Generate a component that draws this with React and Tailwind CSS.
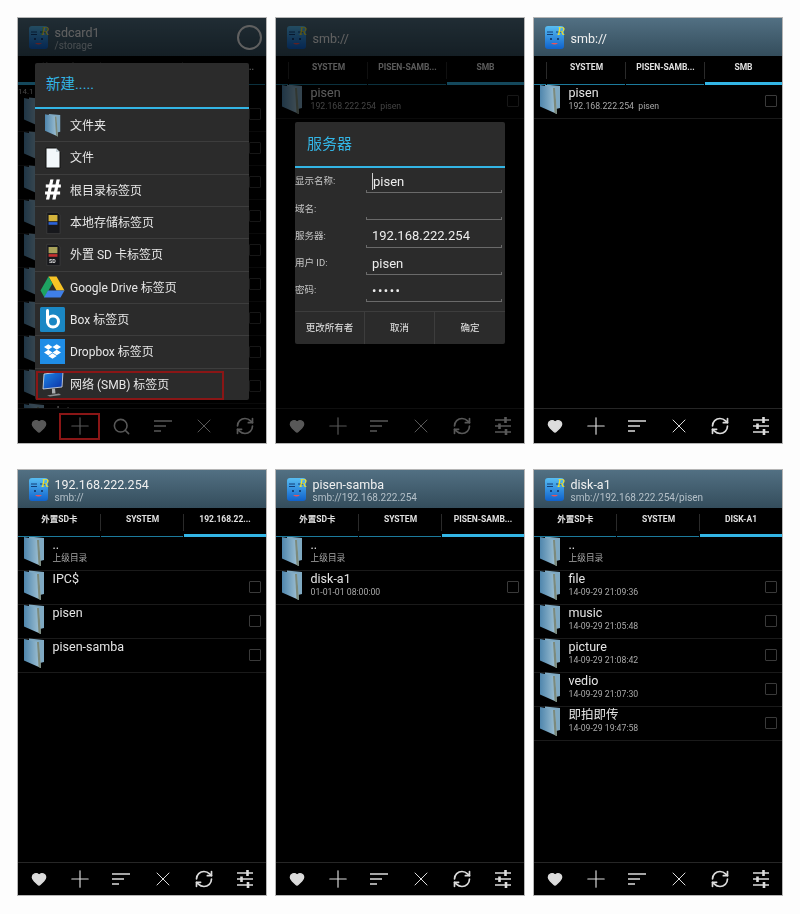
import React from 'react';
import { Heart, Plus, X, RefreshCw, Search } from 'lucide-react';
import { FaDropbox } from 'react-icons/fa';

const cjk = "font-['Roboto','Noto_Sans_CJK_SC',sans-serif]";

const AppLogo = () => (
    <svg width="24" height="26" viewBox="0 0 24 26" className="shrink-0">
        <defs>
            <linearGradient id="logoBlue" x1="0" y1="0" x2="0" y2="1">
                <stop offset="0" stopColor="#58bdf2" />
                <stop offset="1" stopColor="#0f62cc" />
            </linearGradient>
        </defs>
        <rect x="1" y="2" width="19" height="23" rx="3" fill="url(#logoBlue)" />
        <path d="M3 8h6M3 10.5h6M12 8h6" stroke="#123f78" strokeWidth="1" />
        <circle cx="7" cy="15" r="1" fill="#0c2c5c" />
        <circle cx="14" cy="15" r="1" fill="#0c2c5c" />
        <path d="M7 19q3.500 3 7 0z" fill="#e9535b" />
        <text x="13" y="11" fontSize="13" fontStyle="italic" fontFamily="Liberation Serif, serif" fill="#f2e12c">R</text>
    </svg>
);

const Folder = ({ className = '' }) => (
    <svg width="21" height="30" viewBox="0 0 21 30" className={`shrink-0 ${className}`}>
        <defs>
            <linearGradient id="folderFace" x1="0" y1="0" x2="1" y2="0">
                <stop offset="0" stopColor="#4f86ad" />
                <stop offset="1" stopColor="#a5c5d6" />
            </linearGradient>
        </defs>
        <path d="M5 0.500 20 2 20 24 16 25 5 22z" fill="#7fa9c2" />
        <path d="M0 1 15 4 17 30 0 22.500z" fill="url(#folderFace)" />
        <path d="M13 4 15 4 17 30 14.500 29z" fill="#7c8a7c" />
    </svg>
);

const SdIcon = ({ local }) => (
    <svg width="16" height="24" viewBox="0 0 18 26">
        <path d="M2 1h12l3 3v21H2z" fill="#17181c" stroke="#3d3d3d" />
        <rect x="4" y="4" width="10" height="7" fill={local ? '#d3b33c' : '#a8a25a'} />
        <rect x="4" y="12" width="10" height="3" fill={local ? '#2b62d8' : '#c23030'} />
        {!local && <text x="4.500" y="22" fontSize="6" fontWeight="700" fill="#ddd" fontFamily="Roboto, sans-serif">SD</text>}
    </svg>
);

const FileIcon = () => (
    <svg width="16" height="22" viewBox="0 0 16 22">
        <path d="M1 1h10l4 4v16H1z" fill="#f3f8fb" stroke="#111" />
        <path d="M11 1v4h4" fill="#c9d4da" />
    </svg>
);

const DriveIcon = () => (
    <svg width="25" height="22" viewBox="0 0 25 22">
        <path d="M8.500 0.500h8l8 14h-8z" fill="#f7c325" />
        <path d="M8.500 0.500l4 7-8 14-4-7z" fill="#1ea362" />
        <path d="M8 14.500h16.500l-4 7H4z" fill="#3f7fe8" />
    </svg>
);

const BoxIcon = () => (
    <svg width="25" height="25" viewBox="0 0 25 25">
        <rect width="25" height="25" rx="1.500" fill="#1a87c4" />
        <path d="M7.500 3.500v11" stroke="#fff" strokeWidth="3" strokeLinecap="round" />
        <circle cx="13" cy="14.500" r="5.500" fill="none" stroke="#fff" strokeWidth="3" />
    </svg>
);

const DropboxIcon = () => (
    <div className="w-[25px] h-[25px] bg-[#1f8de6] flex items-center justify-center">
        <FaDropbox className="w-[17px] h-[17px] text-white" />
    </div>
);

const MonitorIcon = () => (
    <svg width="22" height="26" viewBox="0 0 22 26">
        <defs>
            <linearGradient id="screenBlue" x1="0" y1="0" x2="1" y2="1">
                <stop offset="0" stopColor="#1f8ae6" />
                <stop offset="1" stopColor="#0a2fa6" />
            </linearGradient>
        </defs>
        <path d="M2 3 21 0.500 20 16 1 18z" fill="url(#screenBlue)" stroke="#dfe5ea" strokeWidth="0.800" />
        <path d="M10 17.500h3l0.500 5h-3.500z" fill="#a9adb0" />
        <path d="M5 24.500 17 22.500 19 24 8 25.500z" fill="#8b8f92" />
    </svg>
);

const SortIcon = () => (
    <svg width="20" height="14" viewBox="0 0 20 14" fill="none" stroke="currentColor" strokeWidth="1.600">
        <path d="M1 2h18M1 7h12M1 12h7" />
    </svg>
);

const SlidersIcon = () => (
    <svg width="20" height="20" viewBox="0 0 20 20" fill="none" stroke="currentColor">
        <path d="M2 4h16M2 10h16M2 16h16" strokeWidth="1.300" />
        <path d="M12.500 1v6M6.500 7.500v5.500M13 13v6" strokeWidth="2.600" />
    </svg>
);

const iconSets = {
    search: [
        <Heart key="h" size={16} fill="currentColor" />,
        <Plus key="p" size={28} strokeWidth={1} />,
        <Search key="s" size={19} strokeWidth={2} />,
        <SortIcon key="o" />,
        <X key="x" size={24} strokeWidth={1} />,
        <RefreshCw key="r" size={20} strokeWidth={2} />,
    ],
    normal: [
        <Heart key="h" size={16} fill="currentColor" />,
        <Plus key="p" size={28} strokeWidth={1} />,
        <SortIcon key="o" />,
        <X key="x" size={24} strokeWidth={1} />,
        <RefreshCw key="r" size={20} strokeWidth={2} />,
        <SlidersIcon key="l" />,
    ],
};

const FileRow = ({ title, sub, check = true }) => (
    <div className="h-[34px] shrink-0 flex items-start pl-[6px] pr-[5px] border-b border-[#1a1a1a]">
        <Folder className="-mt-px" />
        <div className="flex-1 min-w-0 pl-[7.500px]">
            <p className="text-[12.500px] leading-[15px] text-[#e4e4e4] whitespace-nowrap">{title}</p>
            {sub && <p className="text-[8.700px] leading-[12px] text-[#a8a8a8] whitespace-nowrap">{sub}</p>}
        </div>
        {check && <div className="w-[12px] h-[12px] mt-[10px] border border-[#3a3a3a] rounded-[1px]" />}
    </div>
);

const Phone = ({ title, path, tabs, active, cols, rows, icons = 'normal', spinner, children, preRow, barHeight = 'h-[35px]' }) => (
    <div className={`relative w-[248px] h-[425px] bg-black overflow-hidden flex flex-col ring-1 ring-[#b5b5b5] ${cjk}`}>
        <header className="h-[38px] shrink-0 flex items-center pl-[10px] pr-[4px] gap-[2.500px] bg-linear-to-b from-[#527083] to-[#344d5c]">
            <AppLogo />
            <div className="flex-1 min-w-0 pt-[3px]">
                <p className="text-[12.500px] leading-[15px] text-[#f0f0f0]">{title}</p>
                {path && <p className="text-[10px] leading-[12px] text-[#b4c0c8]">{path}</p>}
            </div>
            {spinner && <div className="w-[25px] h-[25px] rounded-full border-2 border-[#f0f0f0]" />}
        </header>
        <nav className={`h-[29px] shrink-0 grid ${cols}`}>
            {tabs.map((tab, i) => (
                <div key={i} className="relative flex flex-col justify-between">
                    <div className="h-[22px] flex items-center justify-center text-[8.500px] font-bold text-[#e0e0e0] whitespace-nowrap overflow-hidden">
                        {tab}
                    </div>
                    {i < tabs.length - 1 && <div className="absolute right-0 top-[6px] h-[17px] w-px bg-[#2a2a2a]" />}
                    {i === active
                        ? <div className="h-[3px] bg-[#33b5e5]" />
                        : <div className="h-[3px] flex items-end"><div className="h-[1.500px] w-full bg-[#1c7a9c] mr-px" /></div>}
                </div>
            ))}
        </nav>
        <div className="flex-1 min-h-0 overflow-hidden">
            {preRow}
            {rows.map((row, i) => <FileRow key={i} {...row} />)}
        </div>
        <footer className={`${barHeight} shrink-0 grid grid-cols-6 border-t border-[#262626] text-[#dcdcdc]`}>
            {iconSets[icons].map((icon, i) => (
                <div key={i} className="flex items-center justify-center">{icon}</div>
            ))}
        </footer>
        {children}
    </div>
);

const menuItems = [
    { label: '文件夹', icon: <Folder className="w-[16px] h-[24px]" /> },
    { label: '文件', icon: <FileIcon /> },
    { label: '根目录标签页', icon: <span className="text-[28px] leading-none font-bold italic text-white font-['Liberation_Sans',sans-serif] [-webkit-text-stroke:1px_white]">#</span> },
    { label: '本地存储标签页', icon: <SdIcon local /> },
    { label: '外置 SD 卡标签页', icon: <SdIcon /> },
    { label: 'Google Drive 标签页', icon: <DriveIcon /> },
    { label: 'Box 标签页', icon: <BoxIcon /> },
    { label: 'Dropbox 标签页', icon: <DropboxIcon /> },
    { label: '网络 (SMB) 标签页', icon: <MonitorIcon />, marked: true },
];

const NewMenu = () => (
    <>
        <div className="absolute inset-0 bg-black/60" />
        <div className="absolute left-[17px] top-[45px] w-[214px] h-[337px] bg-[#2b2b2b] rounded-[2px] flex flex-col">
            <div className="h-[44px] shrink-0 flex items-center pl-[11px] text-[14.500px] text-[#33b5e5]">新建.....</div>
            <div className="h-[2px] shrink-0 bg-[#33b5e5]" />
            <div className="flex-1 grid grid-rows-9">
                {menuItems.map((item, i) => (
                    <div key={i} className={`relative flex items-center text-[12px] text-[#e6e6e6] ${i > 0 ? 'border-t border-[#3d3d3d]' : ''}`}>
                        <div className="w-[35px] flex items-center justify-center shrink-0">{item.icon}</div>
                        <span className="pt-px">{item.label}</span>
                        {item.marked && <div className="absolute left-px top-[2px] bottom-0 w-[188px] border-2 border-[#8a1616]" />}
                    </div>
                ))}
            </div>
        </div>
        {/* red mark round the plus button */}
        <div className="absolute left-[41px] top-[395px] w-[41px] h-[27px] border-2 border-[#8a1616]" />
    </>
);

const fields = [
    { label: '显示名称:', value: 'pisen', caret: true },
    { label: '域名:', value: '' },
    { label: '服务器:', value: '192.168.222.254' },
    { label: '用户 ID:', value: 'pisen' },
    { label: '密码:', value: '•••••', secret: true },
];

const ServerDialog = () => (
    <>
        <div className="absolute inset-0 bg-black/60" />
        <div className="absolute left-[19px] top-[104px] w-[210px] h-[222px] bg-[#2b2b2b] rounded-[2px] flex flex-col">
            <div className="h-[44px] shrink-0 flex items-center pl-[12px] text-[15px] text-[#33b5e5]">服务器</div>
            <div className="h-[2px] shrink-0 bg-[#33b5e5]" />
            <div className="flex-1 flex flex-col pr-[3px]">
                {fields.map((f, i) => (
                    <div key={i} className="h-[27.200px] flex items-center">
                        <span className="w-[71px] shrink-0 text-[9.500px] text-[#c4c4c4]">{f.label}</span>
                        <div className="relative flex-1 h-full flex items-center pl-[6px]">
                            <span className={`text-[13px] leading-[17px] text-[#ececec] ${f.caret ? 'border-l border-[#cfcfcf]' : ''} ${f.secret ? 'tracking-[1.500px]' : ''}`}>{f.value}</span>
                            <div className="absolute left-0 right-0 bottom-[2px] h-[3px] border-b border-x border-[#6a6a6a]" />
                        </div>
                    </div>
                ))}
            </div>
            <div className="h-[33px] shrink-0 grid grid-cols-[70px_70px_70px] border-t border-[#3d3d3d] text-[9.500px] text-[#e6e6e6]">
                <div className="flex items-center justify-center border-r border-[#3d3d3d]">更改所有者</div>
                <div className="flex items-center justify-center border-r border-[#3d3d3d]">取消</div>
                <div className="flex items-center justify-center">确定</div>
            </div>
        </div>
    </>
);

const smbRows = [{ title: 'pisen', sub: <>192.168.222.254&nbsp; pisen</> }];
const upRow = { title: '..', sub: '上级目录', check: false };
const emptyRows = Array.from({ length: 9 }, () => ({ title: '' }));

export default function App() {
    return (
        <div className="min-h-[914px] bg-[#fdfdfd] pt-[18px] pl-[18px]">
            <div className="grid grid-cols-[repeat(3,248px)] gap-x-[10px] gap-y-[27px] blur-[0.4px]">
                <Phone
                    title="sdcard1" path="/storage" spinner icons="search"
                    tabs={['外置SD卡', 'SYSTEM', 'PISEN-SAMB...']} active={0} cols="grid-cols-3"
                    preRow={<div className="h-[13px] text-[8px] leading-[13px] text-[#aaa]">14.1</div>}
                    rows={[...emptyRows, { title: 'data' }]}
                >
                    <NewMenu />
                </Phone>
                <Phone
                    title="smb://"
                    tabs={['', 'SYSTEM', 'PISEN-SAMB...', 'SMB']} active={3} cols="grid-cols-[13px_79px_79px_77px]"
                    rows={smbRows}
                >
                    <ServerDialog />
                </Phone>
                <Phone
                    title="smb://"
                    tabs={['', 'SYSTEM', 'PISEN-SAMB...', 'SMB']} active={3} cols="grid-cols-[13px_79px_79px_77px]"
                    rows={smbRows}
                />
                <Phone
                    title="192.168.222.254" path="smb://" barHeight="h-[33px]"
                    tabs={['外置SD卡', 'SYSTEM', '192.168.22...']} active={2} cols="grid-cols-[83px_83px_82px]"
                    rows={[upRow, { title: 'IPC$' }, { title: 'pisen' }, { title: 'pisen-samba' }]}
                />
                <Phone
                    title="pisen-samba" path="smb://192.168.222.254" barHeight="h-[33px]"
                    tabs={['外置SD卡', 'SYSTEM', 'PISEN-SAMB...']} active={2} cols="grid-cols-[83px_83px_82px]"
                    rows={[upRow, { title: 'disk-a1', sub: '01-01-01 08:00:00' }]}
                />
                <Phone
                    title="disk-a1" path="smb://192.168.222.254/pisen" barHeight="h-[33px]"
                    tabs={['外置SD卡', 'SYSTEM', 'DISK-A1']} active={2} cols="grid-cols-[83px_83px_82px]"
                    rows={[
                        upRow,
                        { title: 'file', sub: '14-09-29 21:09:36' },
                        { title: 'music', sub: '14-09-29 21:05:48' },
                        { title: 'picture', sub: '14-09-29 21:08:42' },
                        { title: 'vedio', sub: '14-09-29 21:07:30' },
                        { title: '即拍即传', sub: '14-09-29 19:47:58' },
                    ]}
                />
            </div>
        </div>
    );
}
